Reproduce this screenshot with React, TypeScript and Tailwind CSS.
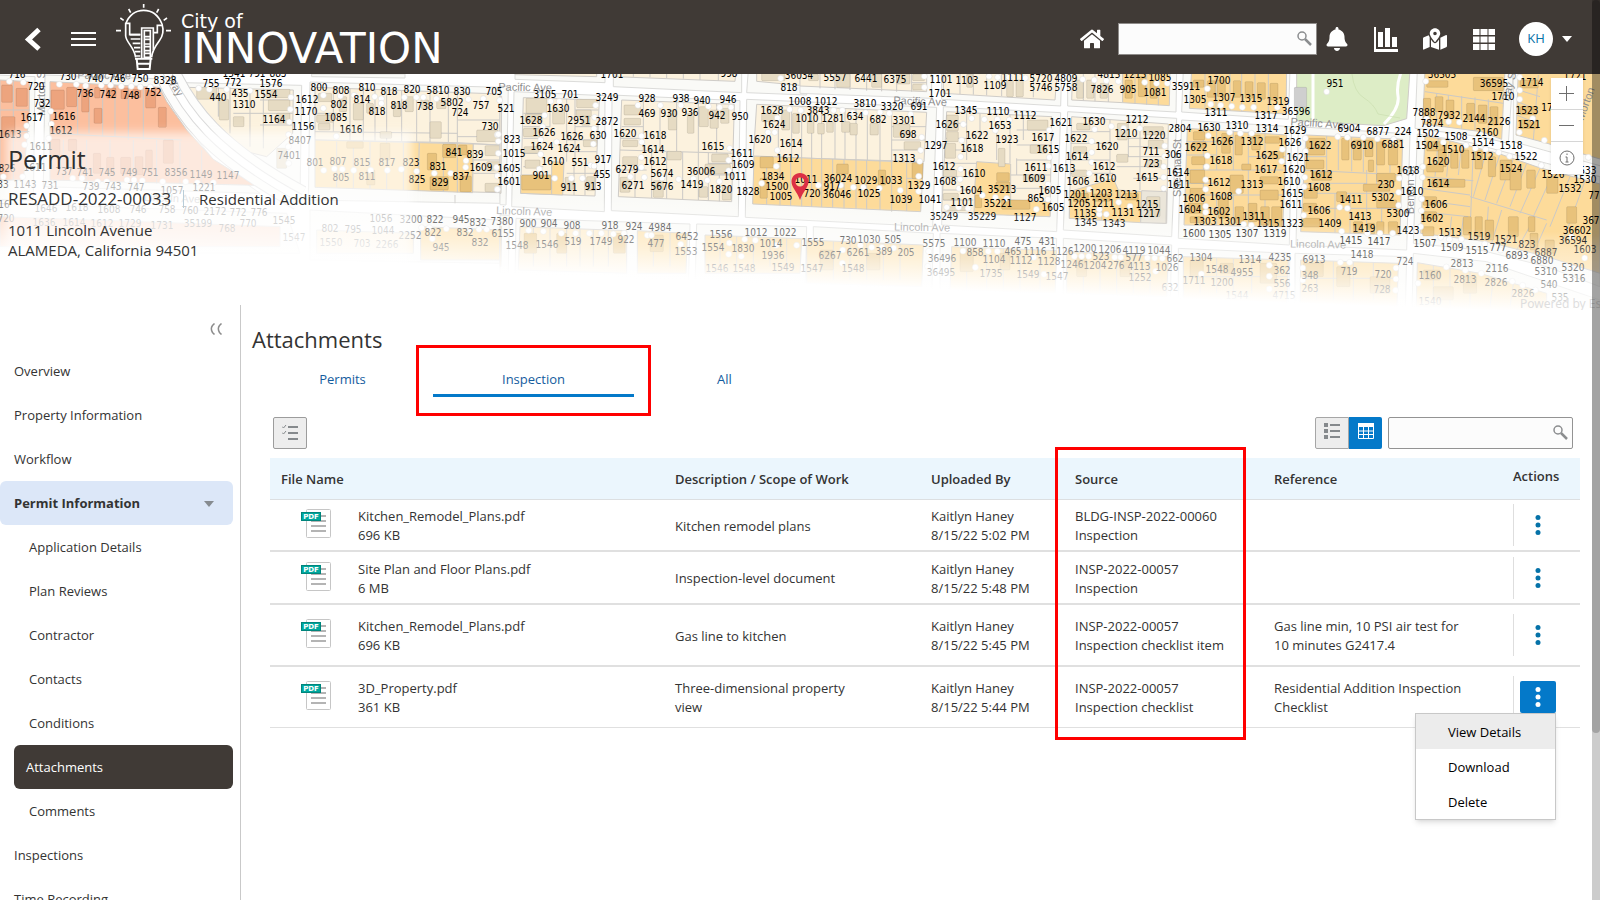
import type React from "react";
import { FaBell, FaHome, FaMapMarkedAlt } from "react-icons/fa";

/* ---------- map data ---------- */

// every sheet is drawn at three units per pixel, ox/oy is where it sits on the map
interface Sheet {
    ox: number;
    oy: number;
    blocks: string[];
    lots: [string, string][];
    lines: string;
    houses: [string, string][];
    dots: string;
    labels: string;
}

const CREAM = "#fcf2de";
const ORANGE = "#fddb9a";
const PALE = "#fde7bd";
const SALMON = "#fcbf9e";
const PARK = "#ddedc6";
const TAN = "#e6dbc3";
const AMBER = "#e8c27b";
const BRICK = "#eda47e";

const sheets: Sheet[] = [
    {
        ox: 0,
        oy: 0,
        blocks: [
            "-10,225 105,230 100,600 -10,600",
            "135,225 470,236 540,350 640,480 780,580 130,560",
            "550,248 905,256 900,600 780,560 640,440",
            "930,246 1500,262 1500,610 925,600",
            "-10,610 860,640 900,760 -10,760",
            "930,630 1500,660 1500,790 930,780",
            "935,222 1215,222 1215,234 935,230",
        ],
        lots: [
            [SALMON, "0,240 88,245 88,330 70,540 0,540"],
            [SALMON, "150,245 478,262 500,305 560,390 640,478 765,556 150,540"],
            [CREAM, "560,262 880,270 878,400 800,470 700,445 640,380"],
            [CREAM, "945,262 1500,282 1500,435 1372,428 945,420"],
            [ORANGE, "945,420 1258,428 1256,572 945,562"],
            [ORANGE, "1258,428 1420,432 1418,578 1255,572"],
            [CREAM, "1420,432 1500,435 1500,578 1418,576"],
            [SALMON, "0,650 840,680 840,740 0,740"],
            [PALE, "950,690 1240,700 1240,760 950,760"],
            [ORANGE, "1262,680 1500,690 1500,780 1262,780"],
        ],
        lines: "M40 240V540M0 330H88M0 395H88M233 250V405M267 252V400M308 252V410M345 254V410M385 256V420M430 258V420M150 400L545 420M190 420V540M260 420V540M330 420V545M400 420V548M470 420V550M540 425V552M605 450V554M655 262V350M690 262V400M750 264V440M790 266V445M700 340H878M780 300H878M780 375H878M1000 265V395M1050 266V420M1090 268V422M1125 268V422M1160 270V422M1205 272V424M1250 272V425M1290 274V426M1345 276V426M1372 278V428M945 340H1010M945 395L1372 400M1372 360H1500M1372 410H1500M1010 425V562M1060 425V564M1110 426V566M1160 426V568M1210 428V570M1330 430V575M1372 430V577M1420 480H1500M1420 520H1500M1365 585V610",
        houses: [
            [BRICK, "5,255,32,52 48,265,34,54 5,350,40,60 153,270,40,58 200,262,30,58 245,270,22,66 284,262,16,32 320,264,28,30 363,264,22,32 398,268,24,25 437,262,30,62 282,325,24,45 475,322,24,60 150,418,30,50 205,418,25,35 280,460,22,60 320,472,22,50 362,472,30,50 405,470,24,54 437,450,20,60 490,420,30,70"],
            [TAN, "590,262,60,36 658,298,28,62 700,350,32,30 800,268,70,25 805,300,65,32 830,340,40,30 830,445,30,60 955,280,40,25 950,345,50,22 955,370,35,20 1018,290,22,45 1060,310,30,50 1100,310,20,30 1140,395,35,20 1180,310,22,40 1215,290,25,45 1290,365,34,50 1262,300,24,25 1310,300,28,26 1430,390,65,35 1455,437,45,30 1460,485,40,28 1455,550,45,25"],
            [AMBER, "1282,460,28,50 1328,433,40,40 1290,530,55,40 1380,528,34,47 1375,435,26,30 1040,425,50,20 1140,430,30,50 1100,510,25,45"],
        ],
        dots: "28,244 70,247 80,377 80,408 74,434 152,334 154,372 146,415 178,253 229,253 257,257 304,256 332,256 364,259 394,259 421,261 451,261 596,265 628,268 680,268 750,272 873,292 871,328 868,366 866,404 865,440 866,490 970,286 970,325 1021,288 1062,286 1124,290 1144,296 1144,310 1213,292 1249,292 1270,292 1309,296 1405,298 1450,296 1009,409 971,511 1003,506 1027,508 1061,511 1112,511 1162,511 1204,508 1250,514 1303,520 1352,520 1398,482 1397,502 1490,504 1492,404 1492,568 10,530 68,530 218,535 246,535 293,545 320,545 381,540 402,540 427,542 488,545 557,545 592,548 640,548 1265,683 1288,683 1339,686 1410,688 1437,688 1460,688 1297,716",
        labels: "716@52,222 720@109,259 732@126,310 1617@97,352 730@204,229 740@284,233 746@352,233 750@421,233 8328@494,240 736@255,279 742@325,281 748@392,286 752@458,277 1616@191,349 1612@184,391 1613@31,403 1611@122,439 826@20,504 1611@105,500 737@192,512 741@256,516 745@321,515 749@386,516 751@450,516 8356@527,517 1149@603,523 1147@684,525 1143@76,552 33@8,552 731@150,555 739@273,558 743@340,558 747@409,561 1057@517,570 1221@613,562 1541@703,218 791@770,218 883@834,218 755@634,249 772@700,247 1576@814,249 440@653,292 435@720,279 1554@798,282 1310@731,313 1164@821,357 1156@908,379 8407@900,421 7401@866,465 1612@920,298 1170@918,334 1085@1009,351 802@1018,312 800@958,262 808@1022,270 810@1101,262 814@1086,297 818@1168,273 818@1130,334 818@1198,316 820@1236,268 738@1276,318 5810@1315,271 830@1386,273 5802@1356,306 724@1381,336 757@1443,315 1616@1053,388 801@944,487 807@1013,484 815@1086,486 817@1162,486 823@1232,485 805@1024,531 811@1100,528 825@1250,538 831@1313,498 829@1319,545 841@1363,456 839@1426,462 1609@1443,501 837@1383,528 730@1470,379 16@12,612 1646@137,625 1618@230,622 1608@326,628 746@413,626 758@500,628 760@569,630 2172@644,632 772@714,637 776@777,636 1545@852,660 720@18,655 1636@132,666 1614@222,665 1612@305,668 1729@390,668 1731@486,675 35199@595,670 768@682,683 770@744,670 1547@883,711 1056@1143,655 3200@1232,657 822@1305,657 945@1383,657 832@1433,666 802@990,683 795@1060,687 1044@1150,690 2252@1231,705 822@1299,696 832@1396,696 832@1441,726 945@1322,741 1550@992,725 703@1085,728 2266@1160,733",
    },
    {
        ox: 400,
        oy: 60,
        blocks: [
            "300,78 325,79 318,435 300,434",
            "342,95 615,107 613,455 335,440",
            "636,105 1020,122 1015,470 634,452",
            "345,30 615,30 615,68 345,58",
            "640,30 1025,30 1025,98 640,80",
            "300,465 328,466 325,640 300,640",
            "348,475 870,492 865,680 345,660",
            "890,492 1220,500 1215,690 885,680",
            "1045,30 1220,30 1220,105 1040,98",
        ],
        lots: [
            [CREAM, "300,108 305,109 303,400 300,400"],
            [CREAM, "370,113 598,120 585,408 362,400"],
            [ORANGE, "455,305 492,307 488,405 362,400 362,345 455,345"],
            [CREAM, "665,120 1003,133 995,425 655,410"],
            [CREAM, "345,30 590,30 590,50 345,44"],
            [CREAM, "645,30 1008,30 1005,64 645,50"],
            [CREAM, "1070,30 1220,30 1220,78 1070,64"],
            [ORANGE, "300,498 305,499 303,620 300,620"],
            [PALE, "360,500 680,512 680,640 355,630"],
            [ORANGE, "712,512 862,520 858,640 712,640"],
            [ORANGE, "915,525 1205,536 1200,640 915,640"],
        ],
        lines: "M370 160H440M370 200H450M370 235H430M370 280H430M370 320H430M450 116V200M500 117V305M525 118V300M525 150H595M525 200H595M500 240H592M500 275H590M500 340H588M522 300V405M555 305V406M455 345V402M700 42V50M750 42V52M800 42V54M850 42V56M900 42V60M955 42V62M730 122V270M780 124V272M830 126V274M895 128V276M950 130V278M665 200H730M660 235H730M660 270L1000 280M660 330H740M925 310H1000M705 330V412M755 275V414M800 275V416M848 276V418M895 277V420M925 277V422M958 345V424M925 345H998M400 500V620M450 502V620M500 504V620M540 506V620M580 508V620M625 510V620M760 514V620M810 516V620M960 527V620M1010 529V620M1060 530V620M1110 532V620M1160 534V620",
        houses: [
            [TAN, "378,115,62,45 530,118,62,25 528,150,46,20 375,162,52,24 458,150,36,42 370,205,50,25 372,260,45,20 375,300,45,25 545,168,25,28 550,240,40,20 495,352,25,36 560,350,25,42 672,135,50,30 672,175,50,20 805,150,25,60 862,160,20,60 897,140,28,60 930,150,25,55 962,145,25,45 668,240,45,20 668,290,45,25 802,274,42,26 935,282,50,24 915,312,76,30 660,352,30,45 760,362,30,50 897,380,26,32 967,380,26,40 1085,30,70,32"],
            [AMBER, "365,346,88,44 372,520,38,60 470,520,30,60 640,520,36,60 750,525,40,50"],
        ],
        dots: "299,121 295,223 295,244 295,280 290,322 292,348 292,388 452,124 478,124 587,136 584,172 582,206 580,252 434,166 428,200 422,240 470,246 422,283 418,327 464,355 514,355 547,355 572,316 582,318 714,136 781,136 843,136 925,139 959,142 993,142 724,228 725,246 724,292 724,322 691,350 733,352 786,354 836,358 880,356 922,361 958,364 989,265 986,301 986,332 1142,55 1169,148 1204,151 1104,217 1124,217 1132,174 1132,271 1129,319 1085,370 386,511 430,514 484,520 527,520 568,520 604,520 640,522 672,520 742,526 754,526 842,553 988,549 1034,538 1066,541 1129,556 1190,556 986,583 1024,589",
        labels: "521@317,145 823@335,237 1015@343,280 1605@328,325 1601@327,364 705@282,94 3105@434,102 701@509,102 3249@620,112 1630@474,144 1628@392,181 2951@536,181 2872@622,184 1626@432,217 1626@515,228 630@595,225 1624@426,259 1624@506,265 1610@458,303 551@540,307 917@608,297 455@606,342 901@423,345 911@507,381 913@579,379 1701@635,42 998@987,40 928@740,115 938@842,113 940@906,120 946@983,117 469@740,159 930@806,160 936@871,156 942@951,165 950@1019,168 1620@676,219 1618@765,225 1614@759,268 1612@764,303 1615@940,258 1611@1025,279 1609@1030,313 1011@1004,348 6279@682,326 5674@787,339 36006@903,334 6271@698,376 5676@785,379 1419@875,372 1820@963,387 1828@1045,393 36034@1197,44 818@1166,82 7380@305,484 6155@308,520 900@384,488 904@448,490 908@515,495 918@629,494 924@701,497 4984@780,501 1548@351,555 1546@440,551 519@520,543 1749@602,543 922@679,537 477@769,549 6452@860,528 1553@858,573 1556@964,522 1012@1068,516 1022@1155,516 1554@940,561 1830@1028,563 1014@1113,549 1936@1118,585 1546@950,625 1548@1033,625 1549@1150,620",
    },
    {
        ox: 800,
        oy: 60,
        blocks: [
            "-160,118 410,142 398,500 -164,472",
            "430,140 782,158 770,515 425,495",
            "803,155 1130,175 1115,530 790,510",
            "20,30 395,30 395,115 0,100 0,30",
            "425,30 785,30 782,138 425,118",
            "803,30 1130,30 1128,156 803,138",
            "40,500 400,520 395,720 40,700",
            "420,520 770,535 765,740 420,720",
            "790,535 1115,555 1110,760 790,740",
        ],
        lots: [
            [CREAM, "-130,133 380,157 372,305 -140,290"],
            [ORANGE, "-138,288 370,308 362,455 -142,432"],
            [CREAM, "0,30 380,30 380,95 0,78"],
            [CREAM, "430,30 772,30 765,120 430,100"],
            [CREAM, "818,30 968,30 968,128 815,120"],
            [ORANGE, "968,30 1110,30 1108,137 968,128"],
            [CREAM, "440,155 755,170 750,470 425,455"],
            [ORANGE, "530,305 632,312 632,420 752,425 750,470 522,462 525,370"],
            [CREAM, "815,170 1105,192 1100,490 808,475"],
            [ORANGE, "808,395 940,355 955,390 1025,395 1022,488 808,475"],
            ["#ebe6da", "1025,392 1100,395 1098,490 1022,488"],
            [ORANGE, "20,540 370,555 365,680 20,670"],
            [ORANGE, "455,560 770,572 765,700 450,690"],
            [ORANGE, "800,575 1105,590 1100,710 800,700"],
        ],
        lines: "M-65 136V290M-25 138V292M5 140V294M35 141V295M65 142V296M105 144V297M135 145V298M168 147V299M202 148V300M240 150V301M275 152V455M-100 290V434M-60 290V436M-28 292V438M5 294V439M35 295V440M65 296V441M98 297V443M132 298V445M168 300V447M200 301V448M240 302V450M320 306V453M275 200H378M275 240H376M275 270H374M320 355H368M60 42V85M105 42V88M150 42V90M200 42V92M245 42V94M290 42V95M335 42V95M335 68H380M480 42V102M520 42V104M560 42V106M605 42V108M650 42V110M700 42V112M850 42V122M885 42V124M925 42V126M1005 42V132M1040 42V134M1075 42V136M440 190H500M438 235H500M436 270H530M432 310H530M430 350H530M428 390H520M428 420H520M500 158V300M540 160V240M590 162V300M630 164V310M670 166V240M650 210H752M650 255H752M650 300H752M632 345H752M632 385H752M650 295V345M815 215H930M812 250H930M810 300H930M810 340H940M930 180V350M985 185V290M1020 186V390M985 235H1103M985 260H1102M950 290H1102M950 320H1101M1000 355H1100M860 395V478M905 395V480M960 395V484M100 545V660M150 547V660M200 549V660M250 551V660M300 553V660M500 562V690M560 564V690M610 566V690M660 568V690M720 570V690M850 578V700M900 580V700M950 582V700M1000 584V700M1050 586V700",
        houses: [
            [TAN, "-115,160,50,25 -55,150,24,60 -22,160,20,60 22,182,20,38 53,190,20,32 80,185,20,32 125,185,25,32 150,190,22,35 210,190,25,35 280,192,50,40 312,245,50,24 25,42,30,20 110,42,40,40 215,42,30,40 290,42,40,30 338,42,36,20 338,72,36,18 440,165,35,48 440,215,35,30 435,250,32,45 595,265,20,55 682,180,62,30 690,255,50,25 670,345,60,20 430,330,40,20 430,400,45,20 440,440,60,12 620,60,20,50 648,60,22,50 500,42,18,40 830,190,40,20 820,260,40,20 815,330,45,20 952,190,30,50 1030,200,60,25 1045,240,45,25 1040,300,45,22 950,283,34,24 1040,410,40,60 830,60,20,55 860,60,22,55 900,70,22,45"],
            [AMBER, "-120,290,40,34 -120,355,22,60 110,312,35,30 235,330,22,45 336,308,32,48 590,338,38,26 588,366,42,26 605,420,85,28 525,405,20,38 820,400,45,25 880,402,50,22 975,400,40,20 975,60,22,55 1015,50,22,60 1050,60,22,55 60,570,40,60 200,580,40,50 480,575,40,60 600,580,30,50 830,590,30,60 960,600,30,50"],
        ],
        dots: "2,151 101,151 127,151 158,158 197,158 240,157 268,160 332,163 365,232 362,271 359,304 356,349 356,394 373,49 373,82 567,49 593,52 627,52 676,54 848,58 883,60 919,62 955,64 1034,67 1070,70 1102,70 55,376 122,376 160,382 190,382 238,385 301,391 515,175 553,178 592,178 628,180 490,193 586,211 485,241 482,290 482,327 480,358 547,406 586,412 620,415 477,385 440,442 476,442 504,445 748,211 748,292 745,318 744,373 744,418 709,448 884,208 934,199 971,205 1019,205 875,244 875,277 875,307 868,340 868,388 1094,289 1091,320 1091,352 1091,385 1094,258 956,427 990,439 898,463 919,463 898,448 128,570 181,556 215,562 246,562 281,564 127,610 386,574 383,619 489,573 565,574 592,574 526,622 701,592 732,643 823,589 845,589 866,589 944,592 962,592 1042,594 1064,594 1087,595 1067,634",
        labels: "1008@-1,124 1010@20,175 1628@-85,151 1624@-77,192 1620@-121,238 1614@-28,249 1612@-37,294 1834@-82,349 1500@-69,379 1005@-57,409 5557@106,51 6441@197,53 6375@284,57 1101@424,57 1103@502,61 1109@584,76 1111@640,52 5720@722,55 4809@798,53 5746@722,80 5758@797,82 1701@420,99 4815@927,42 1215@1005,43 1085@1080,51 7826@906,87 905@985,88 1081@1066,97 1012@77,123 3843@53,149 1281@98,174 3810@195,129 3320@277,138 691@357,139 634@166,169 682@233,178 3301@311,181 698@324,223 1297@408,255 1313@311,294 1345@497,150 1110@595,153 1112@675,166 1626@442,192 1653@600,195 1622@532,225 1923@620,237 1618@515,265 1617@728,231 1621@782,187 1615@745,268 1612@432,318 1608@436,364 1610@523,339 1604@512,391 1611@707,321 1613@792,325 1609@702,354 1605@749,391 865@708,415 1605@758,442 35213@607,388 35221@595,430 1101@486,426 35249@432,469 35229@545,469 1127@675,471 1011@19,358 36024@115,354 917@95,378 36046@112,402 720@35,400 1029@199,359 1033@274,359 1025@206,400 1329@357,375 1039@303,417 1041@390,418 1630@882,183 1212@1012,177 1210@979,219 1220@1062,225 1622@828,234 1620@922,259 1614@830,288 711@1052,273 723@1052,309 306@1119,283 1612@912,318 1610@915,355 1606@835,364 1615@1042,352 1611@1138,373 1201@825,402 1203@904,399 1213@979,402 1205@837,430 1211@909,430 1215@1040,432 1135@854,459 1131@969,457 1217@1048,459 1345@859,487 1343@943,489 2804@1141,205 1555@39,546 730@144,540 1030@207,538 505@280,538 6267@91,584 6261@174,577 389@253,573 205@319,576 5575@402,549 1100@495,547 1110@583,549 475@670,543 431@742,543 36496@426,594 858@525,576 465@638,573 1116@704,573 1126@785,573 1104@581,598 1112@662,601 1128@747,603 36495@424,636 1547@35,625 1548@159,624 1735@573,639 1549@684,642 1547@770,648 1200@856,565 1206@930,567 4119@1003,570 1044@1078,570 523@904,588 577@1002,592 662@1124,595 1246@816,612 1204@886,615 276@949,615 4113@1017,618 1026@1102,621 1252@1021,651 632@1109,681",
    },
    {
        ox: 1180,
        oy: 60,
        blocks: [
            "10,30 330,30 325,178 5,156",
            "5,180 335,200 328,555 -5,535",
            "355,200 690,222 680,570 348,555",
            "712,30 1000,30 985,250 900,230 705,205",
            "712,222 860,245 1100,310 1260,350 1260,680 1100,620 900,570 700,550",
            "1000,30 1270,30 1270,320 1090,270 1000,245",
            "-5,565 330,580 325,760 -5,760",
            "345,580 680,590 675,790 345,780",
            "700,580 920,605 1260,720 1260,800 695,800",
        ],
        lots: [
            [ORANGE, "35,30 320,30 318,162 28,145"],
            [ORANGE, "22,205 320,225 308,500 12,495"],
            [ORANGE, "378,225 668,238 660,525 362,515"],
            [ORANGE, "735,30 975,30 965,238 905,215 728,192"],
            [ORANGE, "1015,30 1270,30 1270,300 1095,248 1008,225"],
            [ORANGE, "735,228 800,240 960,282 1075,322 1260,372 1260,640 1100,590 920,545 722,520"],
            [PARK, "350,30 690,30 680,176 610,197 350,182"],
            [ORANGE, "10,590 325,600 320,740 10,730"],
            [ORANGE, "362,600 655,610 650,770 360,760"],
            [ORANGE, "712,608 900,640 1100,700 1100,790 708,780"],
        ],
        lines: "M75 42V148M108 42V150M150 42V152M185 42V154M225 42V156M265 42V158M70 208V495M110 210V330M160 212V330M205 215V330M255 218V330M20 245H110M18 285H110M18 330H310M16 370H110M16 405H310M14 445H110M205 290H315M205 330V498M160 405V498M255 405V500M110 405V496M440 228V330M475 230V330M515 232V334M550 233V336M590 235V400M630 236V338M375 290H440M372 330L665 345M370 370H560M368 400H660M365 445H660M465 400V518M510 400V520M560 330V522M605 445V523M735 95L970 130M770 100V196M805 105V198M845 108V206M885 112V212M925 118V222M1015 90L1080 110M1012 125L1075 150M1010 165L1070 190M1075 45L1060 240M775 236L765 350M810 243L800 350M845 252L835 345M880 262L870 520M920 272L880 410M960 282L915 420M1000 296L950 430M1040 310L990 440M1080 325L1020 460M1120 338L1060 470M1170 350L1110 500M1215 362L1150 540M728 350L880 362M726 385L870 405M724 420L870 440M722 455L865 470M870 410L1100 480M815 470L808 530M850 474L842 536M890 480L882 540M925 440L918 545M965 450L935 550M1010 470L970 560M1060 480L1010 570M1100 490L1060 580M60 592V700M110 594V700M160 596V700M215 598V700M10 650H325M410 602V720M460 604V720M520 606V720M580 608V720M360 655H655M760 615V740M810 622V740M870 634V740M940 655L930 740M1000 672L990 740",
        houses: [
            [AMBER, "40,60,32,22 82,62,24,50 112,60,24,50 160,62,22,50 195,65,24,50 232,68,24,50 270,70,24,50 40,215,34,25 38,245,40,20 125,220,26,60 165,225,22,60 215,225,26,45 255,230,44,20 270,275,40,22 35,290,40,24 30,330,44,40 150,345,40,55 185,312,28,18 240,350,55,22 240,390,55,30 30,385,44,22 25,430,48,30 30,470,40,18 115,415,30,60 165,440,26,50 205,430,26,55 242,440,26,55 275,440,30,60 380,235,56,28 378,265,56,20 378,300,54,26 395,335,60,26 372,385,40,30 370,430,40,24 370,475,50,26 485,235,22,65 520,240,24,60 555,240,24,50 590,245,24,70 625,260,28,55 565,300,16,35 590,340,56,26 550,372,80,22 590,420,60,24 470,395,30,30 520,485,28,34 560,490,24,32 590,485,22,36 625,485,28,36 740,62,64,20 730,115,22,60 765,110,24,45 798,120,24,55 860,130,24,50 895,135,26,55 930,140,24,55 880,52,90,40 1020,60,55,24 1020,140,50,24 1020,180,55,26 740,245,60,28 775,270,24,50 812,270,22,55 845,270,22,55 885,272,22,55 925,290,22,60 960,300,36,60 990,330,34,60 1040,330,26,55 1100,350,34,50 740,312,50,24 755,358,100,24 730,410,40,26 725,455,45,22 728,500,34,28 850,470,24,55 885,470,22,60 915,480,26,60 985,470,30,60 1045,470,20,45 1050,520,24,50 1095,540,28,40 1160,440,30,50 30,600,40,50 120,610,40,30 240,610,50,60 370,610,60,40 470,620,40,60 570,650,60,50 730,630,50,30 760,680,60,40 850,650,40,50"],
            ["#cfcfcf", "343,82,37,60"],
        ],
        dots: "82,86 92,133 122,136 155,139 187,142 221,142 292,142 440,95 85,227 149,217 181,220 215,220 82,287 80,320 77,359 77,388 176,394 77,439 77,457 191,493 214,496 307,268 305,304 376,235 376,274 374,352 372,380 371,466 473,230 502,232 550,232 592,236 641,238 658,355 656,397 656,436 479,442 502,445 485,514 562,520 600,520 638,520 737,64 1019,52 1019,91 1019,118 1018,217 1058,176 1093,241 740,176 806,185 838,187 728,320 727,352 725,417 724,452 722,500 790,247 858,256 886,265 917,268 956,277 989,289 1084,316 782,532 808,538 844,538 914,552 962,570 1225,292 1174,530 1214,594 268,616 268,649 268,687 64,642 368,624 481,607 509,607 648,624 648,657 647,691 368,660 799,621 856,631 904,640 997,664 1028,676 1066,690 714,670",
        labels: "1700@118,60 35911@18,78 1305@44,117 1307@131,111 1315@213,114 1319@295,123 1311@107,156 1317@259,165 36596@347,153 951@464,70 1310@171,195 1314@261,204 1629@344,211 1630@87,202 1626@127,243 1312@215,243 1626@331,246 1622@49,262 1618@123,300 1625@261,286 1621@355,291 1617@258,327 1620@341,327 1614@-7,336 1612@116,366 1313@215,372 1610@326,363 1606@42,414 1608@124,408 1615@337,400 1604@30,448 1602@116,453 1611@333,433 1303@75,484 1301@151,484 1311@223,469 1315@263,490 1323@337,489 1600@41,519 1305@121,523 1307@200,519 1319@286,520 6904@506,205 6877@593,213 224@670,213 1622@421,255 6910@545,255 6881@638,252 1612@422,343 1608@416,381 1606@418,449 1409@449,489 1411@513,418 1413@539,468 1419@552,504 230@619,372 5302@608,412 5300@653,460 1618@684,330 1610@696,393 1423@685,510 1415@514,541 1417@596,543 1418@545,582 724@675,603 36505@785,42 36595@942,69 1710@970,108 1714@1055,67 7888@732,156 7932@807,165 2144@881,174 2126@958,183 7874@757,189 1523@1041,150 17@1100,141 1521@1046,192 1502@744,219 1508@829,228 2160@922,216 1514@908,246 1504@741,255 1510@820,267 1512@907,289 1518@994,255 1522@1037,289 1620@775,303 1524@993,324 1526@1119,343 1614@773,369 1606@767,432 1602@757,475 1533@1215,330 1530@1214,358 1532@1171,385 77@1243,406 1513@811,516 1519@896,528 1521@979,538 777@953,561 823@1042,552 1507@734,549 1509@815,561 1515@891,570 6893@1012,586 6887@1097,576 6880@1085,600 367@1233,481 36602@1192,510 36594@1180,540 1603@1215,567 5320@1180,621 5310@1098,634 5316@1181,654 540@1106,673 2813@846,610 2116@950,624 2813@855,657 2826@949,666 1160@751,646 2826@1030,699 535@1141,711 1721@1185,48 1304@62,591 1314@211,598 4235@301,591 1548@111,627 4955@185,636 362@305,630 1711@41,660 1200@125,666 556@306,669 6913@401,598 348@390,645 719@508,633 720@608,642 263@389,684 728@606,687 1544@170,704 4715@311,706 1540@750,722",
    },
];

const streets: [number, number, number, string][] = [
    [525, 91, 1, "Pacific Ave"],
    [920, 105, 2, "Pacific Ave"],
    [1317, 127, 4, "Pacific Ave"],
    [524, 215, 2, "Lincoln Ave"],
    [922, 231, 1, "Lincoln Ave"],
    [1318, 248, 1, "Lincoln Ave"],
    [104, 79, 1, "Pacific Ave"],
    [172, 202, 2, "Lincoln Ave"],
    [172, 88, 58, "Way"],
    [45, 92, -90, "Morton St"],
    [1181, 168, -90, "Sherman St"],
    [1414, 190, -90, "Benton St"],
    [1513, 86, -75, "Bay St"],
    [1589, 105, -70, "Morton"],
];

const pairs = (list: string) => list.split(" ").map((p) => p.split(",").map(Number));

const SheetShapes = ({ sheet }: { sheet: Sheet }) => {
    return (
        <g transform={`translate(${sheet.ox} ${sheet.oy}) scale(${1 / 3})`}>
            {sheet.blocks.map((points) => (
                <polygon key={points} points={points} fill="#fafaf7" stroke="#dcdcda" strokeWidth="3" />
            ))}
            {sheet.lots.map(([fill, points]) => (
                <polygon key={points} points={points} fill={fill} stroke="#cfccc8" strokeWidth="3" />
            ))}
            <path d={sheet.lines} fill="none" stroke="#cbc9c6" strokeWidth="3" />
            {sheet.houses.map(([fill, list]) =>
                pairs(list).map(([x, y, w, h]) => (
                    <rect key={`${x}-${y}`} x={x} y={y} width={w} height={h} rx="3" fill={fill} stroke="#00000018" strokeWidth="3" />
                ))
            )}
        </g>
    );
};

const SheetLabels = ({ sheet }: { sheet: Sheet }) => {
    return (
        <g>
            {pairs(sheet.dots).map(([x, y]) => (
                <circle key={`${x}-${y}`} cx={sheet.ox + x / 3} cy={sheet.oy + y / 3} r="3" fill="#fff" stroke="#d9d9d9" strokeWidth="0.5" />
            ))}
            {sheet.labels.split(" ").map((item) => {
                const [text, at] = item.split("@");
                const [x, y] = at.split(",").map(Number);
                return (
                    <text key={item} x={Math.round(sheet.ox + x / 3)} y={Math.round(sheet.oy + y / 3) + 4} textAnchor="middle">
                        {text}
                    </text>
                );
            })}
        </g>
    );
};

const ParcelMap = () => {
    return (
        <svg
            className="absolute inset-x-0 top-0 h-[236px] w-full"
            viewBox="0 74 1600 236"
            preserveAspectRatio="xMinYMin slice"
            aria-hidden="true"
        >
            <defs>
                <linearGradient id="fade" gradientUnits="userSpaceOnUse" x1="700" y1="200" x2="697" y2="281">
                    <stop offset="0" stopColor="#fff" stopOpacity="0" />
                    <stop offset="0.2" stopColor="#fff" stopOpacity="0.34" />
                    <stop offset="0.6" stopColor="#fff" stopOpacity="0.6" />
                    <stop offset="1" stopColor="#fff" />
                </linearGradient>
                <filter id="soft" x="-20%" y="-20%" width="140%" height="140%">
                    <feGaussianBlur stdDeviation="5" />
                </filter>
            </defs>
            <rect y="74" width="1600" height="236" fill="#fff" />
            {sheets.map((sheet) => (
                <SheetShapes key={sheet.ox} sheet={sheet} />
            ))}
            <g fill="none">
                <path d="M166 70C185 112 215 152 300 198" stroke="#d6d6d6" strokeWidth="26" />
                <path d="M166 70C185 112 215 152 300 198" stroke="#fdfdfc" strokeWidth="24" />
                <path d="M166 70C185 112 215 152 300 198" stroke="#d9d9d9" strokeWidth="9" />
                <path d="M166 70C185 112 215 152 300 198" stroke="#fff" strokeWidth="7" />
                <path d="M1313 74V122M1402 70Q1396 84 1398 96T1384 124" stroke="#fff" strokeWidth="3" />
                <path d="M1352 74Q1354 92 1364 98T1378 114L1400 118" stroke="#c3d8a6" strokeWidth="0.5" />
            </g>
            <g fontFamily="Liberation Sans, sans-serif" fontSize="11" fill="#8e8e8e" textAnchor="middle">
                {streets.map(([x, y, angle, name]) => (
                    <text key={`${x}-${y}`} x={x} y={y} transform={`rotate(${angle} ${x} ${y})`}>
                        {name}
                    </text>
                ))}
            </g>
            <g fontFamily="DejaVu Sans Condensed, Noto Sans, sans-serif" fontSize="10" fill="#000">
                {sheets.map((sheet) => (
                    <SheetLabels key={sheet.ox} sheet={sheet} />
                ))}
            </g>
            <path
                d="M800 173c-5 0-8.500 3.800-8.500 8.500 0 6 5.500 10 8.500 18.500 3-8.500 8.500-12.500 8.500-18.500 0-4.700-3.500-8.500-8.500-8.500zm0 4.500a4.500 4.500 0 1 1 0 9 4.500 4.500 0 0 1 0-9z"
                fill="#dc2f45"
                fillRule="evenodd"
            />
            <rect x="6" y="132" width="406" height="200" fill="#fff" opacity="0.66" filter="url(#soft)" />
            <rect y="74" width="1600" height="236" fill="url(#fade)" />
            <text x="1520" y="308" fontFamily="Noto Sans, sans-serif" fontSize="12" fill="#dedede">
                Powered by Esri
            </text>
        </svg>
    );
};

/* ---------- icons ---------- */

const Logo = () => {
    return (
        <svg className="h-[68px] w-[57px] shrink-0" viewBox="345 9 171 204" fill="none" stroke="#fff" strokeWidth="5" aria-hidden="true">
            <path d="M431 12V23M386 27L392 38M361 54L371 61M348 92H363M476 27L470 38M501 54L491 61M498 92H513" />
            <path d="M377 72C387 45 408 31 431 31S475 45 486 72M377 68V108C380 130 402 140 407 172" />
            <path d="M377 70H389V104H421M486 76H472V98H461M486 72C492 92 489 108 478 122C466 138 456 152 455 172" />
            <path d="M390 104H421M392 117H421M398 130H421M402 143H421M405 155H421M407 168H421" strokeWidth="5" />
            <path d="M425 176V84H460V150M433 92H451V172H433ZM433 110H451M433 118H451M433 132H451M433 140H451M433 152H451M433 160H451" />
            <path d="M405 176H457M410 176L413 207H449L452 176M411 191H451" strokeWidth="6" />
        </svg>
    );
};

const ChartIcon = () => {
    return (
        <svg className="h-[25px] w-6" viewBox="0 0 24 25" fill="#fff" aria-hidden="true">
            <path d="M0 0H2V22H24V25H0ZM4 5H9V20H4ZM11 1H16V20H11ZM18 10H23V20H18Z" />
        </svg>
    );
};

const GridIcon = () => {
    return (
        <svg className="h-[21px] w-[22px]" viewBox="0 0 22 21" fill="#fff" aria-hidden="true">
            <path d="M0 0H6.500V6H0ZM7.500 0H14.500V6H7.500ZM15.500 0H22V6H15.500ZM0 7.500H6.500V13.500H0ZM7.500 7.500H14.500V13.500H7.500ZM15.500 7.500H22V13.500H15.500ZM0 15H6.500V21H0ZM7.500 15H14.500V21H7.500ZM15.500 15H22V21H15.500Z" />
        </svg>
    );
};

const SearchIcon = () => {
    return (
        <svg className="pointer-events-none absolute top-2 right-[5px] size-[15px]" viewBox="0 0 15 15" fill="none" stroke="#8b8d8f" aria-hidden="true">
            <circle cx="5" cy="5" r="4" strokeWidth="1.500" />
            <path d="M8 8L14 14" strokeWidth="2.500" />
        </svg>
    );
};

const PdfIcon = () => {
    return (
        <svg className="mb-1 h-[30px] w-[31px] shrink-0" viewBox="0 0 31 30" aria-hidden="true">
            <rect x="5.500" y="0.500" width="24" height="28" rx="1" fill="#fff" stroke="#c6c6c6" />
            <path d="M20 7H25M10 12H25M10 17H25M10 22H25" stroke="#b4b4b4" strokeWidth="2" />
            <rect x="0.500" y="3.500" width="19" height="8" fill="#00a79d" stroke="#00857c" />
            <text x="10" y="10" textAnchor="middle" fontFamily="DejaVu Sans, sans-serif" fontSize="7" fontWeight="700" fill="#fff">
                PDF
            </text>
        </svg>
    );
};

const Dots = () => {
    return (
        <svg className="h-5 w-1.5" viewBox="0 0 6 20" fill="currentColor" aria-hidden="true">
            <circle cx="3" cy="2.500" r="2.500" />
            <circle cx="3" cy="10" r="2.500" />
            <circle cx="3" cy="17.500" r="2.500" />
        </svg>
    );
};

/* ---------- page parts ---------- */

const Header = () => {
    return (
        <header className="flex h-[74px] items-center bg-[#403a36] text-white">
            <div className="flex items-center pt-1">
                <button className="ml-6" aria-label="Back">
                    <svg className="h-6 w-[18px]" viewBox="0 0 18 24" fill="none" stroke="#fff" strokeWidth="5" aria-hidden="true">
                        <path d="M15 2.500L4.500 12.500L15 22" />
                    </svg>
                </button>
                <button className="ml-[29px] flex w-[25px] flex-col gap-1" aria-label="Menu">
                    <span className="h-0.5 w-full bg-white" />
                    <span className="h-0.5 w-full bg-white" />
                    <span className="h-0.5 w-full bg-white" />
                </button>
            </div>
            <a href="#" className="ml-[19px] flex items-center gap-[9px] font-['DejaVu_Sans',sans-serif]">
                <Logo />
                <span className="flex flex-col pt-1">
                    <span className="text-[19px] leading-5">City of</span>
                    <span className="text-[42px] leading-9">INNOVATION</span>
                </span>
            </a>
            <div className="ml-auto flex items-center pt-1">
                <button aria-label="Home">
                    <FaHome className="size-6" />
                </button>
                <div className="relative ml-[14px]">
                    <input type="search" aria-label="Search" className="block h-8 w-[199px] border border-[#8f8c8a] bg-[#fcfcfc] px-2 text-sm text-black" />
                    <SearchIcon />
                </div>
                <button className="ml-[9px]" aria-label="Notifications">
                    <FaBell className="h-6 w-[22px]" />
                </button>
                <button className="ml-[26px]" aria-label="Reports">
                    <ChartIcon />
                </button>
                <button className="ml-[25px]" aria-label="Map">
                    <FaMapMarkedAlt className="size-6" />
                </button>
                <button className="ml-[26px]" aria-label="Apps">
                    <GridIcon />
                </button>
                <button className="ml-6 flex items-center gap-[9px]" aria-label="Account">
                    <span className="flex size-[34px] items-center justify-center rounded-full bg-white text-[13px] text-[#0572a8]">KH</span>
                    <span className="border-x-5 border-t-6 border-x-transparent border-t-white" />
                </button>
            </div>
            <div className="w-7" />
        </header>
    );
};

const Hero = () => {
    return (
        <section className="relative h-[231px]">
            <ParcelMap />
            <div className="relative px-2 pt-[67px]">
                <h1 className="text-[25px] leading-9 text-[#2f2f2f]">Permit</h1>
                <div className="mt-1 flex items-center">
                    <span className="text-[17px] leading-9">RESADD-2022-00033</span>
                    <span className="mr-[15px] ml-3 h-[18px] w-px bg-[#b9cdd8]" />
                    <span className="text-[15px] leading-9">Residential Addition</span>
                </div>
                <p className="mt-[3px] text-[15px] leading-5">
                    1011 Lincoln Avenue
                    <br />
                    ALAMEDA, California 94501
                </p>
            </div>
            <div className="absolute top-1 right-[17px] flex w-8 flex-col divide-y divide-[#d6d6d6] bg-white text-[#6e6e6e] shadow">
                <button className="flex h-8 items-center justify-center" aria-label="Zoom in">
                    <svg className="size-4" viewBox="0 0 16 16" stroke="currentColor" aria-hidden="true">
                        <path d="M0 7.500H15M7.500 0V15" />
                    </svg>
                </button>
                <button className="flex h-8 items-center justify-center" aria-label="Zoom out">
                    <svg className="size-4" viewBox="0 0 16 16" stroke="currentColor" aria-hidden="true">
                        <path d="M0 7.500H15" />
                    </svg>
                </button>
                <button className="flex h-8 items-center justify-center" aria-label="Map information">
                    <svg className="size-4" viewBox="0 0 16 16" fill="none" stroke="currentColor" aria-hidden="true">
                        <circle cx="8" cy="8" r="7" />
                        <path d="M8 3.500V5M6.500 7H8V12M6.500 12H9.500" />
                    </svg>
                </button>
            </div>
        </section>
    );
};

const SideItem = ({ children }: { children: React.ReactNode }) => {
    return (
        <a href="#" className="flex h-11 items-center pt-0.5 pl-[14px]">
            {children}
        </a>
    );
};

const SubItem = ({ children }: { children: React.ReactNode }) => {
    return (
        <a href="#" className="flex h-11 items-center pt-0.5 pl-[29px]">
            {children}
        </a>
    );
};

const Sidebar = () => {
    const details = ["Application Details", "Plan Reviews", "Contractor", "Contacts", "Conditions"];

    return (
        <aside className="w-[241px] shrink-0 border-r border-[#c9c9c9] pr-[7px]">
            <div className="flex h-11 items-end justify-end pr-2.5 pb-[14px]">
                <button aria-label="Collapse">
                    <svg className="h-3 w-[14px]" viewBox="0 0 14 12" fill="none" stroke="#8c8c8c" strokeWidth="1.500" aria-hidden="true">
                        <path d="M5.500 0.500L3.500 2.500C2 4.500 2 7 3.500 9.500L5.500 11.500M12.500 0.500L10.500 2.500C9 4.500 9 7 10.500 9.500L12.500 11.500" />
                    </svg>
                </button>
            </div>
            <nav>
                <SideItem>Overview</SideItem>
                <SideItem>Property Information</SideItem>
                <SideItem>Workflow</SideItem>
                <button className="flex h-11 w-full items-center justify-between rounded-md bg-[#dce7f8] pt-0.5 pr-[19px] pl-[14px] font-bold">
                    Permit Information
                    <span className="border-x-5 border-t-6 border-x-transparent border-t-[#868b90]" />
                </button>
                {details.map((e) => (
                    <SubItem key={e}>{e}</SubItem>
                ))}
                <a href="#" className="ml-[14px] flex h-11 items-center rounded-md bg-[#403a36] pt-0.5 pl-3 text-white">
                    Attachments
                </a>
                <SubItem>Comments</SubItem>
                <SideItem>Inspections</SideItem>
                <SideItem>Time Recording</SideItem>
            </nav>
        </aside>
    );
};

const Tabs = () => {
    return (
        <div role="tablist" className="ml-1.5 flex text-[#145c9e]">
            <button role="tab" className="h-9 w-[191px] pt-0.5">
                Permits
            </button>
            <button role="tab" aria-selected="true" className="relative h-9 w-[191px] pt-0.5">
                Inspection
                <span className="absolute -inset-x-[5px] bottom-0 h-[3px] bg-[#0479c9]" />
                <span className="pointer-events-none absolute -inset-x-[22px] -top-4 -bottom-[19px] border-3 border-[#ff0000]" />
            </button>
            <button role="tab" className="h-9 w-[191px] pt-0.5">
                All
            </button>
        </div>
    );
};

const Toolbar = () => {
    return (
        <div className="mt-5 flex items-center pr-[7px] pl-[3px]">
            <button className="flex h-8 w-[34px] items-center justify-center rounded-xs border border-[#9c9c9c] bg-[#ededed]" aria-label="Select items">
                <svg className="size-4" viewBox="0 0 16 16" fill="none" stroke="#85898c" aria-hidden="true">
                    <path d="M6 2H16M6 8H16M6 14H16" strokeWidth="2" />
                    <path d="M0 1.500L1.500 3L4 0M0 7.500L1.500 9L4 6" />
                </svg>
            </button>
            <div className="ml-auto flex">
                <button className="flex h-8 w-[34px] justify-center rounded-l-xs border border-[#a6a6a6] bg-[#ededed] pt-[5px]" aria-label="List view">
                    <svg className="size-4" viewBox="0 0 16 16" fill="#85898c" aria-hidden="true">
                        <path d="M0 0H4V4H0ZM0 6H4V10H0ZM0 12H4V16H0ZM6 1H16V3H6ZM6 7H16V9H6ZM6 13H16V15H6Z" />
                    </svg>
                </button>
                <button className="flex h-8 w-[33px] justify-center rounded-r-xs bg-[#0479c9] pt-1.5" aria-label="Table view">
                    <svg className="size-4" viewBox="0 0 16 16" fill="none" stroke="#fff" aria-hidden="true">
                        <path d="M0 0H16V4H0Z" fill="#fff" stroke="none" />
                        <path d="M0.500 3V15.500H15.500V3M5.500 3V15.500M10.500 3V15.500M0.500 8H15.500M0.500 11.500H15.500" />
                    </svg>
                </button>
            </div>
            <div className="relative ml-1.5">
                <input type="search" aria-label="Search attachments" className="block h-8 w-[185px] rounded-xs border border-[#939393] bg-[#fcfcfc] px-2 text-sm" />
                <SearchIcon />
            </div>
        </div>
    );
};

interface Attachment {
    name: string;
    size: string;
    description: string;
    date: string;
    source: string;
    kind: string;
    reference: string;
    height: string;
}

const attachments: Attachment[] = [
    { name: "Kitchen_Remodel_Plans.pdf", size: "696 KB", description: "Kitchen remodel plans", date: "8/15/22 5:02 PM", source: "BLDG-INSP-2022-00060", kind: "Inspection", reference: "", height: "h-[52px]" },
    { name: "Site Plan and Floor Plans.pdf", size: "6 MB", description: "Inspection-level document", date: "8/15/22 5:48 PM", source: "INSP-2022-00057", kind: "Inspection", reference: "", height: "h-[53px]" },
    { name: "Kitchen_Remodel_Plans.pdf", size: "696 KB", description: "Gas line to kitchen", date: "8/15/22 5:45 PM", source: "INSP-2022-00057", kind: "Inspection checklist item", reference: "Gas line min, 10 PSI air test for 10 minutes G2417.4", height: "h-[62px]" },
    { name: "3D_Property.pdf", size: "361 KB", description: "Three-dimensional property view", date: "8/15/22 5:44 PM", source: "INSP-2022-00057", kind: "Inspection checklist", reference: "Residential Addition Inspection Checklist", height: "h-[61px]" },
];

const ActionMenu = () => {
    return (
        <div role="menu" className="absolute top-8 right-0 z-10 flex w-[141px] flex-col border border-[#c8c8c8] bg-white text-black shadow-md">
            <button role="menuitem" className="h-[35px] bg-[#ececec] pt-0.5 pl-8 text-left">
                View Details
            </button>
            <button role="menuitem" className="h-[35px] pt-0.5 pl-8 text-left">
                Download
            </button>
            <button role="menuitem" className="h-[35px] pt-0.5 pl-8 text-left">
                Delete
            </button>
        </div>
    );
};

const AttachmentTable = () => {
    const open = attachments.length - 1;

    return (
        <div className="relative mt-[9px]">
            <table className="w-full table-fixed border-separate border-spacing-0 text-left leading-[19px] [&_td]:border-b-2 [&_td]:border-[#e0e0e0] [&_td]:pl-[11px] [&_th]:border-b [&_th]:border-[#dcdfe1] [&_th]:pl-[11px] [&_th]:font-semibold [&_tr:last-child_td]:border-b">
                <thead>
                    <tr className="h-[42px] bg-[#ebf6fd]">
                        <th className="pt-0.5">File Name</th>
                        <th className="w-[256px] pt-0.5">Description / Scope of Work</th>
                        <th className="w-[144px] pt-0.5">Uploaded By</th>
                        <th className="w-[199px] pt-0.5">Source</th>
                        <th className="w-[239px] pt-0.5">Reference</th>
                        <th className="w-[78px] pb-1">Actions</th>
                    </tr>
                </thead>
                <tbody>
                    {attachments.map((e, i) => {
                        return (
                            <tr key={i} className={e.height}>
                                <td className="pt-0.5">
                                    <div className="flex items-center gap-[26px] pl-5">
                                        <PdfIcon />
                                        <div>
                                            <a href="#">{e.name}</a>
                                            <p>{e.size}</p>
                                        </div>
                                    </div>
                                </td>
                                <td className="pt-0.5">
                                    <p className="max-w-[190px]">{e.description}</p>
                                </td>
                                <td className="pt-0.5">
                                    <p>Kaitlyn Haney</p>
                                    <p>{e.date}</p>
                                </td>
                                <td className="pt-0.5">
                                    <p>{e.source}</p>
                                    <p>{e.kind}</p>
                                </td>
                                <td className="pt-0.5">
                                    <p className="max-w-[200px]">{e.reference}</p>
                                </td>
                                <td className="p-0">
                                    <div className="flex h-[42px] items-center border-l border-[#dedede] pl-1.5">
                                        <div className="relative">
                                            <button
                                                aria-label="Actions"
                                                className={
                                                    i === open
                                                        ? "flex h-8 w-9 items-center justify-center rounded-xs bg-[#0479c9] text-white"
                                                        : "flex h-8 w-9 items-center justify-center text-[#0572a8]"
                                                }
                                            >
                                                <Dots />
                                            </button>
                                            {i === open && <ActionMenu />}
                                        </div>
                                    </div>
                                </td>
                            </tr>
                        );
                    })}
                </tbody>
            </table>
            <div className="pointer-events-none absolute -top-[11px] right-[334px] -bottom-3 w-[191px] border-3 border-[#ff0000]" />
        </div>
    );
};

export default function App() {
    return (
        <div className="relative h-screen overflow-hidden bg-white font-['Open_Sans',sans-serif] text-[13px] text-[#333]">
            <Header />
            <Hero />
            <div className="relative flex">
                <Sidebar />
                <main className="min-w-0 flex-1 pr-5 pt-4">
                    <h2 className="ml-[11px] text-[22px] leading-9">Attachments</h2>
                    <div className="mt-1">
                        <Tabs />
                    </div>
                    <div className="ml-[29px]">
                        <Toolbar />
                        <AttachmentTable />
                    </div>
                </main>
            </div>
            <div className="absolute inset-y-0 right-0 w-2 bg-black/20">
                <div className="h-[733px] rounded-full bg-black/20" />
            </div>
        </div>
    );
}
